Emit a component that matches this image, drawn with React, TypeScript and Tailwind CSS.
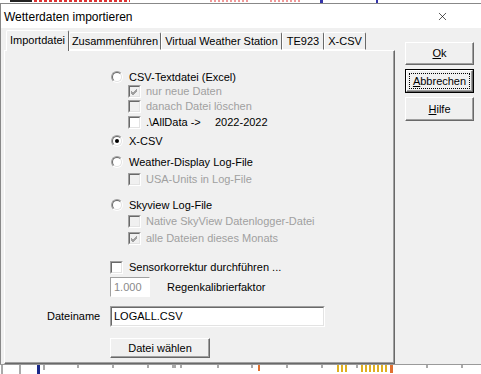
import { X } from "lucide-react";

const font = "font-['Liberation_Sans',Arial,sans-serif]";

function Check({ checked = false, disabled = false }: { checked?: boolean; disabled?: boolean }) {
    return (
        <div className="w-[13px] h-[13px] shrink-0 border border-t-[#a0a0a0] border-l-[#a0a0a0] border-b-white border-r-white">
            <div
                className={`w-full h-full border border-t-[#696969] border-l-[#696969] border-b-[#e3e3e3] border-r-[#e3e3e3] flex items-center justify-center ${
                    disabled ? "bg-[#f0f0f0]" : "bg-white"
                }`}
            >
                {checked && (
                    <svg width="9" height="9" viewBox="0 0 9 9">
                        <path
                            d="M1 4 L3 6 L7 2 M1 5 L3 7 L7 3 M1 6 L3 8 L7 4"
                            stroke={disabled ? "#a0a0a0" : "#000"}
                            strokeWidth="1"
                            fill="none"
                        />
                    </svg>
                )}
            </div>
        </div>
    );
}

function Radio({ checked = false }: { checked?: boolean }) {
    return (
        <div className="w-[12px] h-[12px] shrink-0 rounded-full border border-t-[#a0a0a0] border-l-[#a0a0a0] border-b-white border-r-white">
            <div className="w-full h-full rounded-full border border-t-[#696969] border-l-[#696969] border-b-[#e3e3e3] border-r-[#e3e3e3] bg-white flex items-center justify-center">
                {checked && <div className="w-[4px] h-[4px] rounded-full bg-black" />}
            </div>
        </div>
    );
}

function Btn({ children, w, h, focus = false }: { children: React.ReactNode; w: string; h: string; focus?: boolean }) {
    return (
        <div className={`${w} ${h} ${focus ? "border border-black" : ""}`}>
            <div className="w-full h-full bg-[#f0f0f0] border border-t-white border-l-white border-b-[#696969] border-r-[#696969] shadow-[inset_-1px_-1px_#a0a0a0] flex items-center justify-center p-[2px]">
                <div className={`w-full h-full flex items-center justify-center ${focus ? "border border-dotted border-black" : ""}`}>
                    {children}
                </div>
            </div>
        </div>
    );
}

export default function App() {
    const tabs = [
        { label: "Zusammenführen", w: "w-[92px]" },
        { label: "Virtual Weather Station", w: "w-[121px]" },
        { label: "TE923", w: "w-[42px]" },
        { label: "X-CSV", w: "w-[42px]" },
    ];

    return (
        <div className={`w-[481px] h-[374px] bg-white overflow-hidden flex flex-col text-[11px] text-black ${font}`}>
            {/* Background app behind the dialog (top edge) */}
            <svg width="481" height="3" className="block shrink-0">
                <rect x="10" y="0" width="22" height="2" fill="#222" />
                <path d="M34 1 H130" stroke="#d33" strokeDasharray="3 2" strokeWidth="2" />
                <path d="M210 1 H250 M270 1 H300" stroke="#d33" strokeDasharray="2 2" strokeWidth="1" />
                <rect x="320" y="0" width="3" height="3" fill="#33a" />
                <rect x="376" y="0" width="2" height="3" fill="#33a" />
            </svg>

            <div className="flex-1 flex flex-col border-t border-l border-[#888] min-h-0">
                {/* Title bar */}
                <div className="h-[24px] shrink-0 bg-white flex items-center justify-between pl-[3px] pr-[32px]">
                    <span className="text-[12px] pt-[1px]">Wetterdaten importieren</span>
                    <X size={13} strokeWidth={1.2} className="text-black" />
                </div>

                {/* Dialog body */}
                <div className="h-[336px] shrink-0 bg-[#f0f0f0] flex">
                    <div className="w-[393px] pl-[3px] pt-[2px] flex flex-col">
                        {/* Tab strip */}
                        <div className="h-[20px] flex items-end pl-[2px] relative z-10">
                            <div className="w-[63px] h-[21px] mb-[-1px] bg-[#f0f0f0] border-t border-l border-white border-r border-r-[#696969] rounded-t-[2px] flex items-center justify-center pb-[1px]">
                                Importdatei
                            </div>
                            {tabs.map((t) => (
                                <div
                                    key={t.label}
                                    className={`${t.w} h-[18px] bg-[#f0f0f0] border-t border-l border-white border-r border-r-[#696969] border-b border-b-white rounded-t-[2px] flex items-center justify-center`}
                                >
                                    {t.label}
                                </div>
                            ))}
                        </div>

                        {/* Tab panel */}
                        <div className="h-[314px] w-[391px] border-t border-l border-white border-b border-r border-b-[#696969] border-r-[#696969] shadow-[inset_-1px_-1px_#a0a0a0] pl-[42px] pt-[19px] flex flex-col">
                            <div className="ml-[64px] flex flex-col">
                                <div className="h-[14px] flex items-center gap-[6px]">
                                    <Radio />
                                    <span>CSV-Textdatei (Excel)</span>
                                </div>
                                <div className="h-[14px] flex items-center gap-[5px] ml-[17px] text-[#a0a0a0]">
                                    <Check checked disabled />
                                    <span>nur neue Daten</span>
                                </div>
                                <div className="h-[14px] mt-[1px] flex items-center gap-[5px] ml-[17px] text-[#a0a0a0]">
                                    <Check disabled />
                                    <span>danach Datei löschen</span>
                                </div>
                                <div className="h-[14px] mt-[2px] flex items-center gap-[5px] ml-[17px]">
                                    <Check />
                                    <span className="w-[64px]">.\AllData -&gt;</span>
                                    <span>2022-2022</span>
                                </div>
                                <div className="h-[14px] mt-[5px] flex items-center gap-[6px]">
                                    <Radio checked />
                                    <span>X-CSV</span>
                                </div>
                                <div className="h-[14px] mt-[7px] flex items-center gap-[6px]">
                                    <Radio />
                                    <span>Weather-Display Log-File</span>
                                </div>
                                <div className="h-[14px] mt-[3px] flex items-center gap-[5px] ml-[17px] text-[#a0a0a0]">
                                    <Check disabled />
                                    <span>USA-Units in Log-File</span>
                                </div>
                                <div className="h-[14px] mt-[12px] flex items-center gap-[6px]">
                                    <Radio />
                                    <span>Skyview Log-File</span>
                                </div>
                                <div className="h-[14px] mt-[2px] flex items-center gap-[5px] ml-[17px] text-[#a0a0a0]">
                                    <Check disabled />
                                    <span>Native SkyView Datenlogger-Datei</span>
                                </div>
                                <div className="h-[14px] mt-[3px] flex items-center gap-[5px] ml-[17px] text-[#a0a0a0]">
                                    <Check checked disabled />
                                    <span>alle Dateien dieses Monats</span>
                                </div>
                                <div className="h-[14px] mt-[15px] flex items-center gap-[6px] ml-[-1px]">
                                    <Check />
                                    <span>Sensorkorrektur durchführen ...</span>
                                </div>
                                <div className="h-[20px] mt-[3px] flex items-center gap-[17px] ml-[-1px]">
                                    <div className="w-[40px] h-[20px] border border-t-[#a0a0a0] border-l-[#a0a0a0] border-b-white border-r-white bg-white text-[#8a8a8a] flex items-center pl-[3px]">
                                        1.000
                                    </div>
                                    <span>Regenkalibrierfaktor</span>
                                </div>
                            </div>

                            <div className="h-[21px] mt-[9px] flex items-center">
                                <span className="w-[63px]">Dateiname</span>
                                <div className="w-[215px] h-[21px] border border-t-[#a0a0a0] border-l-[#a0a0a0] border-b-white border-r-white">
                                    <div className="w-full h-full bg-white border border-t-[#696969] border-l-[#696969] border-b-[#e3e3e3] border-r-[#e3e3e3] flex items-center pl-[2px]">
                                        LOGALL.CSV
                                    </div>
                                </div>
                            </div>

                            <div className="mt-[11px] ml-[63px]">
                                <Btn w="w-[100px]" h="h-[20px]">Datei wählen</Btn>
                            </div>
                        </div>
                    </div>

                    {/* Right buttons */}
                    <div className="pl-[11px] pt-[14px] flex flex-col gap-[4px]">
                        <Btn w="w-[69px]" h="h-[23px]">
                            <span><u>O</u>k</span>
                        </Btn>
                        <Btn w="w-[69px]" h="h-[24px]" focus>
                            <span><u>A</u>bbrechen</span>
                        </Btn>
                        <Btn w="w-[69px]" h="h-[24px]">
                            <span><u>H</u>ilfe</span>
                        </Btn>
                    </div>
                </div>
            </div>

            {/* Background app chart (bottom edge) */}
            <svg width="481" height="10" className="block shrink-0 bg-white">
                <path d="M0 0.5 H481" stroke="#9a9a9a" strokeWidth="1" />
                <path
                    d="M2 1 V10 M20 1 V10 M44 1 V6 M78 1 V4 M113 1 V4 M148 1 V4 M173 1 V4 M175 1 V4 M181 1 V4 M218 1 V4 M252 1 V4 M287 1 V4 M322 1 V4 M357 1 V4 M392 1 V4 M427 1 V4 M462 1 V4"
                    stroke="#555"
                    strokeWidth="1"
                />
                <rect x="37" y="1" width="3" height="9" fill="#1a2a8a" />
                <rect x="258" y="1" width="2" height="6" fill="#e07030" />
                <path d="M338 1 V8 M342 1 V8 M346 1 V8 M362 1 V8 M366 1 V8 M370 1 V8 M374 1 V8 M378 1 V8 M382 1 V8 M386 1 V8" stroke="#e0b020" strokeWidth="2" />
                <rect x="390" y="1" width="3" height="8" fill="#e07030" />
            </svg>
        </div>
    );
}
